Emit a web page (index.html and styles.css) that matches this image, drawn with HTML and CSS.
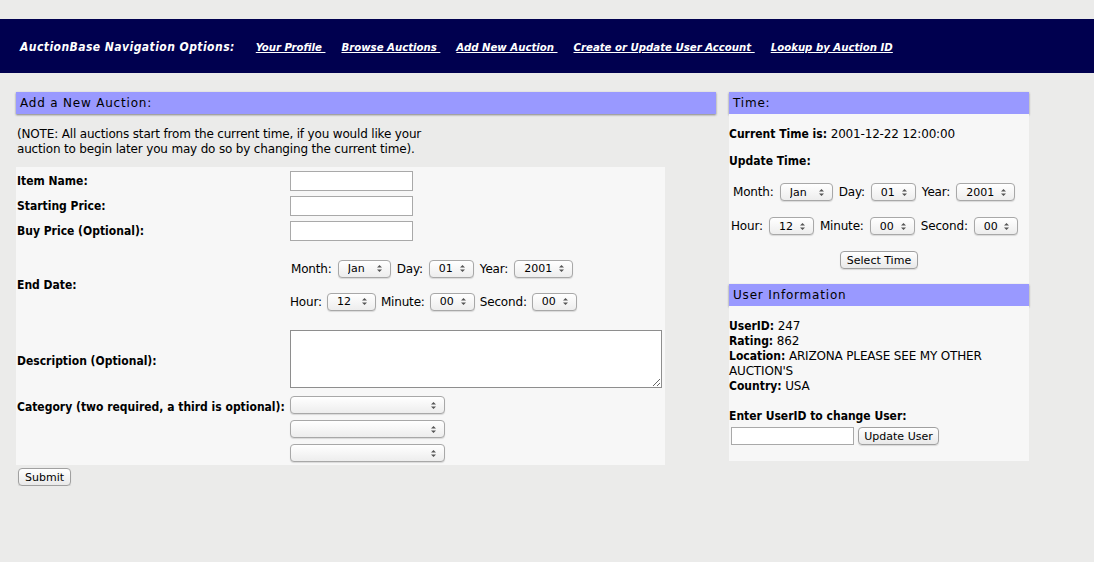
FILE: index.html
```html
<!DOCTYPE html>
<html>
<head>
<meta charset="utf-8">
<link rel="stylesheet" href="styles.css">
</head>
<body>
<div class="top-gap"></div>
<nav class="nav">
  <span class="nav-title">AuctionBase Navigation Options:</span>
  <a href="#" class="nav-link">Your Profile&nbsp;</a>
  <a href="#" class="nav-link">Browse Auctions&nbsp;</a>
  <a href="#" class="nav-link">Add New Auction&nbsp;</a>
  <a href="#" class="nav-link">Create or Update User Account&nbsp;</a>
  <a href="#" class="nav-link">Lookup by Auction ID</a>
</nav>
<div class="page">
  <main class="main">
    <h2 class="bar">Add a New Auction:</h2>
    <p class="note">(NOTE: All auctions start from the current time, if you would like your<br>auction to begin later you may do so by changing the current time).</p>
    <form class="form-table">
      <div class="row row-input">
        <label class="lbl">Item Name:</label>
        <div class="val"><input type="text" class="txt"></div>
      </div>
      <div class="row row-input">
        <label class="lbl">Starting Price:</label>
        <div class="val"><input type="text" class="txt"></div>
      </div>
      <div class="row row-input">
        <label class="lbl">Buy Price (Optional):</label>
        <div class="val"><input type="text" class="txt"></div>
      </div>
      <div class="row row-date">
        <label class="lbl">End Date:</label>
        <div class="val date-lines">
          <div class="dl dl1"><span>Month:</span><select class="sel w-mon"><option>Jan</option></select><span>Day:</span><select class="sel w-2"><option>01</option></select><span>Year:</span><select class="sel w-yr"><option>2001</option></select></div>
          <div class="dl dl2"><span>Hour:</span><select class="sel w-hr"><option>12</option></select><span>Minute:</span><select class="sel w-2"><option>00</option></select><span>Second:</span><select class="sel w-2"><option>00</option></select></div>
        </div>
      </div>
      <div class="row row-desc">
        <label class="lbl">Description (Optional):</label>
        <div class="val"><textarea class="ta"></textarea></div>
      </div>
      <div class="row row-cat">
        <label class="lbl">Category (two required, a third is optional):</label>
        <div class="val cats">
          <select class="sel w-cat"><option></option></select>
          <select class="sel w-cat"><option></option></select>
          <select class="sel w-cat"><option></option></select>
        </div>
      </div>
    </form>
    <button class="btn submit" type="button">Submit</button>
  </main>
  <aside class="side">
    <h2 class="bar bar-time">Time:</h2>
    <div class="panel time-panel">
      <p class="cur"><b>Current Time is:</b> 2001-12-22 12:00:00</p>
      <p class="upd"><b>Update Time:</b></p>
      <div class="tl tl1"><span>Month:</span><select class="sel w-mon"><option>Jan</option></select><span>Day:</span><select class="sel w-2"><option>01</option></select><span>Year:</span><select class="sel w-yr"><option>2001</option></select></div>
      <div class="tl tl2"><span>Hour:</span><select class="sel w-hr2"><option>12</option></select><span>Minute:</span><select class="sel w-2"><option>00</option></select><span>Second:</span><select class="sel w-2s"><option>00</option></select></div>
      <div class="center"><button class="btn sel-time" type="button">Select Time</button></div>
    </div>
    <h2 class="bar">User Information</h2>
    <div class="panel user-panel">
      <div class="info"><b>UserID:</b> 247<br><b>Rating:</b> 862<br><b>Location:</b> ARIZONA PLEASE SEE MY OTHER AUCTION'S<br><b>Country:</b> USA</div>
      <p class="enter"><b>Enter UserID to change User:</b></p>
      <div class="chg"><input type="text" class="txt uid"><button class="btn upd-btn" type="button">Update User</button></div>
    </div>
  </aside>
</div>
</body>
</html>
```
FILE: styles.css
```css
html, body {
  margin: 0;
  padding: 0;
  background: #ebebea;
  font-family: "DejaVu Sans", "Liberation Sans", sans-serif;
  font-size: 12px;
  letter-spacing: -0.17px;
  color: #000;
}
b, .lbl {
  font-family: "DejaVu Sans Condensed", "DejaVu Sans", sans-serif;
  font-weight: bold;
  letter-spacing: 0;
}
.top-gap { height: 19px; }
.nav {
  height: 54px;
  box-sizing: border-box;
  padding: 2px 0 0 20px;
  background: #00004f;
  display: flex;
  align-items: center;
  font-family: "DejaVu Sans Condensed", "DejaVu Sans", sans-serif;
  font-weight: bold;
  font-style: italic;
  font-size: 12px;
  color: #fff;
}
.nav-title { margin-right: 21px; letter-spacing: 0.45px; }
.nav-link { color: #fff; text-decoration: underline; margin-right: 16px; letter-spacing: 0; font-size: 11.3px; }
.page {
  display: flex;
  gap: 13px;
  padding: 19px 0 0 16px;
  align-items: flex-start;
}
.main { width: 700px; }
.side { width: 300px; }
.bar {
  margin: 0;
  height: 22px;
  line-height: 23px;
  background: #9999ff;
  box-shadow: 0 1px 2px rgba(0,0,0,0.45);
  font-family: "DejaVu Sans", sans-serif;
  font-weight: normal;
  font-size: 12px;
  letter-spacing: 0.8px;
  padding-left: 4px;
}
.note { margin: 13px 0 10px 1px; line-height: 15px; }
.form-table {
  width: 649px;
  background: #f7f7f7;
  padding: 4px 0 3px 0;
}
.row { display: flex; align-items: center; }
.lbl { width: 273px; padding-left: 1px; flex: none; }
.val { flex: none; }
.row-input { height: 25px; align-items: flex-start; }
.row-input .lbl { line-height: 20px; }
.txt {
  box-sizing: border-box;
  width: 123px;
  height: 20px;
  border: 1px solid #a9a9a9;
  background: #fff;
  margin: 0;
  padding: 0 2px;
  display: block;
}
.row-date { height: 76px; padding-top: 1px; }
.dl { height: 33px; display: flex; align-items: center; gap: 6px; }
.dl1 { padding-left: 1px; }
.dl2 { gap: 5px; }
.sel {
  -webkit-appearance: none;
  appearance: none;
  box-sizing: border-box;
  height: 18px;
  border: 1px solid #a8a8a8;
  border-radius: 4px;
  background-color: #f4f4f4;
  background-image: url("data:image/svg+xml;utf8,<svg xmlns='http://www.w3.org/2000/svg' width='7' height='9'><path d='M1 3.5 L3.5 1 L6 3.5Z M1 5.5 L3.5 8 L6 5.5Z' fill='%23555'/></svg>"), linear-gradient(#ffffff, #ededed);
  background-repeat: no-repeat, no-repeat;
  background-position: right 7px center, 0 0;
  font-family: "DejaVu Sans", sans-serif;
  font-size: 11px;
  padding: 0 0 0 9px;
  margin: 0;
  color: #000;
  box-shadow: 0 1px 1px rgba(0,0,0,0.12);
}
.w-mon { width: 53px; }
.w-2 { width: 45px; }
.w-2s { width: 44px; }
.w-yr { width: 59px; }
.w-hr { width: 49px; }
.w-hr2 { width: 45px; }
.w-cat { width: 155px; display: block; }
.row-desc { height: 72px; align-items: flex-start; }
.row-desc .lbl { padding-top: 31px; line-height: 15px; }
.ta {
  box-sizing: border-box;
  width: 372px;
  height: 58px;
  border: 1px solid #8e8e8e;
  background: #fff;
  margin: 7px 0 0 0;
  display: block;
}
.row-cat { align-items: flex-start; margin-top: 1px; }
.row-cat .lbl { padding-top: 4px; }
.cats { display: flex; flex-direction: column; gap: 6px; }
.btn {
  font-family: "DejaVu Sans", sans-serif;
  font-size: 11px;
  height: 18px;
  padding: 0 6px;
  border: 1px solid #a0a0a0;
  border-radius: 4px;
  background: linear-gradient(#ffffff, #e9e9e9);
  box-shadow: 0 1px 1px rgba(0,0,0,0.12);
  color: #000;
}
.submit { margin: 3px 0 0 2px; width: 53px; }
.panel { background: #f7f7f7; }
.time-panel { padding: 13px 0 15px 0; }
.cur { margin: 0; line-height: 15px; }
.upd { margin: 12px 0 0 0; line-height: 15px; }
.tl { display: flex; align-items: center; gap: 6px; height: 18px; }
.tl1 { margin-top: 14px; padding-left: 4px; }
.tl2 { margin-top: 16px; padding-left: 2px; }
.center { display: flex; justify-content: center; margin-top: 16px; }
.sel-time { width: 78px; padding: 0; }
.user-panel { padding: 13px 0 16px 0; }
.info { line-height: 15px; }
.enter { margin: 15px 0 3px 0; line-height: 15px; }
.chg { display: flex; align-items: center; gap: 4px; padding-left: 2px; }
.uid { width: 123px; height: 18px; }
.upd-btn { width: 81px; padding: 0; }
```
